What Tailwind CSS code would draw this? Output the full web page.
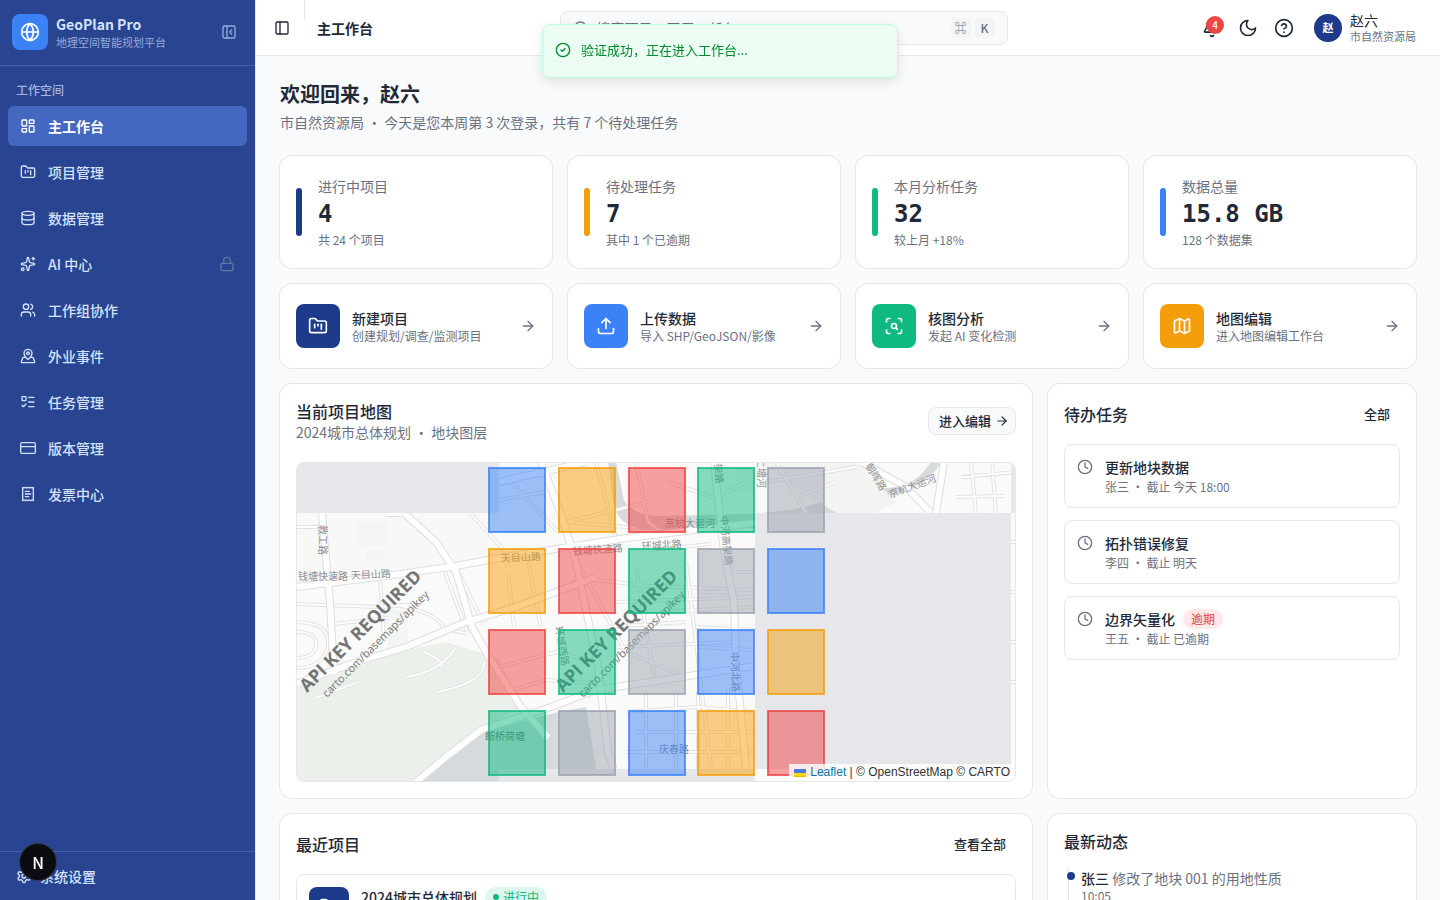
<!DOCTYPE html>
<html lang="zh-CN">
<head>
    <meta charset="UTF-8">
    <meta name="viewport" content="width=device-width, initial-scale=1.0">
    <title>GeoPlan Pro - 主工作台</title>
    <script src="https://cdn.jsdelivr.net/npm/@tailwindcss/browser@4"></script>
    <style>
        body {
            font-family: 'Noto Sans CJK SC', sans-serif;
        }
        .icon {
            fill: none;
            stroke: currentColor;
            stroke-width: 2;
            stroke-linecap: round;
            stroke-linejoin: round;
            flex-shrink: 0;
        }
    </style>
</head>
<body class="bg-[#f9fafc] text-[#1f2937]">
    <!-- shared icons -->
    <svg class="hidden">
        <symbol id="i-folder" viewBox="0 0 24 24"><path d="M4 20h16a2 2 0 0 0 2-2V8a2 2 0 0 0-2-2h-7.93a2 2 0 0 1-1.66-.9l-.82-1.2A2 2 0 0 0 7.93 3H4a2 2 0 0 0-2 2v13c0 1.1.9 2 2 2Z"/><path d="M8 10v4"/><path d="M12 10v2"/><path d="M16 10v6"/></symbol>
        <symbol id="i-arrow" viewBox="0 0 24 24"><path d="M5 12h14"/><path d="m12 5 7 7-7 7"/></symbol>
        <symbol id="i-clock" viewBox="0 0 24 24"><circle cx="12" cy="12" r="10"/><path d="M12 6v6l4 2"/></symbol>
    </svg>

    <div class="flex h-screen overflow-hidden">
        <!-- sidebar -->
        <aside class="flex w-64 shrink-0 flex-col border-r border-gray-200 bg-[#294490] text-[#d5e2fb]">
            <div class="flex h-[66px] items-center gap-2 border-b border-[#4561aa] px-3 pb-0.5">
                <div class="flex size-9 items-center justify-center rounded-lg bg-[#3b82f6] text-white">
                    <svg class="icon size-5" viewBox="0 0 24 24"><circle cx="12" cy="12" r="10"/><path d="M12 2a14.5 14.5 0 0 0 0 20 14.5 14.5 0 0 0 0-20"/><path d="M2 12h20"/></svg>
                </div>
                <div class="flex-1">
                    <div class="text-[14px] leading-5 font-bold">GeoPlan Pro</div>
                    <div class="text-[11px] leading-4 text-[#97aad8]">地理空间智能规划平台</div>
                </div>
                <button aria-label="收起侧栏" class="mr-0.5 p-1 text-[#97aad8]">
                    <svg class="icon size-4" viewBox="0 0 24 24"><rect width="18" height="18" x="3" y="3" rx="2"/><path d="M9 3v18"/><path d="m16 15-3-3 3-3"/></svg>
                </button>
            </div>
            <div class="flex-1 px-2 pt-4">
                <div class="px-2 pb-2 text-xs font-medium text-[#a5b5dc]">工作空间</div>
                <nav class="flex flex-col gap-1.5 text-sm font-medium">
                    <a href="#" class="flex h-10 items-center gap-3 rounded-md bg-[#4468bf] px-3 font-bold text-white">
                        <svg class="icon size-4" viewBox="0 0 24 24"><rect width="7" height="9" x="3" y="3" rx="1"/><rect width="7" height="5" x="14" y="3" rx="1"/><rect width="7" height="9" x="14" y="12" rx="1"/><rect width="7" height="5" x="3" y="16" rx="1"/></svg>
                        主工作台
                    </a>
                    <a href="#" class="flex h-10 items-center gap-3 rounded-md px-3">
                        <svg class="icon size-4"><use href="#i-folder"/></svg>
                        项目管理
                    </a>
                    <a href="#" class="flex h-10 items-center gap-3 rounded-md px-3">
                        <svg class="icon size-4" viewBox="0 0 24 24"><ellipse cx="12" cy="5" rx="9" ry="3"/><path d="M3 5V19A9 3 0 0 0 21 19V5"/><path d="M3 12A9 3 0 0 0 21 12"/></svg>
                        数据管理
                    </a>
                    <a href="#" class="flex h-10 items-center gap-3 rounded-md px-3">
                        <svg class="icon size-4" viewBox="0 0 24 24"><path d="M11.017 2.814a1 1 0 0 1 1.966 0l1.051 5.558a2 2 0 0 0 1.594 1.594l5.558 1.051a1 1 0 0 1 0 1.966l-5.558 1.051a2 2 0 0 0-1.594 1.594l-1.051 5.558a1 1 0 0 1-1.966 0l-1.051-5.558a2 2 0 0 0-1.594-1.594l-5.558-1.051a1 1 0 0 1 0-1.966l5.558-1.051a2 2 0 0 0 1.594-1.594z"/><path d="M20 2v4"/><path d="M22 4h-4"/><circle cx="4" cy="20" r="2"/></svg>
                        <span class="flex-1">AI 中心</span>
                        <svg class="icon size-4 text-[#62769f]" viewBox="0 0 24 24"><rect width="18" height="11" x="3" y="11" rx="2"/><path d="M7 11V7a5 5 0 0 1 10 0v4"/></svg>
                    </a>
                    <a href="#" class="flex h-10 items-center gap-3 rounded-md px-3">
                        <svg class="icon size-4" viewBox="0 0 24 24"><path d="M16 21v-2a4 4 0 0 0-4-4H6a4 4 0 0 0-4 4v2"/><circle cx="9" cy="7" r="4"/><path d="M22 21v-2a4 4 0 0 0-3-3.87"/><path d="M16 3.13a4 4 0 0 1 0 7.75"/></svg>
                        工作组协作
                    </a>
                    <a href="#" class="flex h-10 items-center gap-3 rounded-md px-3">
                        <svg class="icon size-4" viewBox="0 0 24 24"><path d="M18 8c0 3.613-3.869 7.429-5.393 8.795a1 1 0 0 1-1.214 0C9.87 15.429 6 11.613 6 8a6 6 0 0 1 12 0"/><circle cx="12" cy="8" r="2"/><path d="M8.714 14h-3.71a1 1 0 0 0-.948.683l-2.004 6A1 1 0 0 0 3 22h18a1 1 0 0 0 .948-1.316l-2-6a1 1 0 0 0-.949-.684h-3.712"/></svg>
                        外业事件
                    </a>
                    <a href="#" class="flex h-10 items-center gap-3 rounded-md px-3">
                        <svg class="icon size-4" viewBox="0 0 24 24"><rect width="6" height="6" x="3" y="4" rx="1"/><path d="m3 17 2 2 4-4"/><path d="M13 5h8"/><path d="M13 12h8"/><path d="M13 19h8"/></svg>
                        任务管理
                    </a>
                    <a href="#" class="flex h-10 items-center gap-3 rounded-md px-3">
                        <svg class="icon size-4" viewBox="0 0 24 24"><rect width="22" height="16" x="1" y="4" rx="2"/><path d="M1 10h22"/></svg>
                        版本管理
                    </a>
                    <a href="#" class="flex h-10 items-center gap-3 rounded-md px-3">
                        <svg class="icon size-4" viewBox="0 0 24 24"><path d="M4 2v20l2-1 2 1 2-1 2 1 2-1 2 1 2-1 2 1V2l-2 1-2-1-2 1-2-1-2 1-2-1-2 1Z"/><path d="M14 8H8"/><path d="M16 12H8"/><path d="M13 16H8"/></svg>
                        发票中心
                    </a>
                </nav>
            </div>
            <div class="h-[49px] border-t border-[#4561aa] px-2 py-2">
                <a href="#" class="flex h-8 items-center gap-2 px-2 text-sm font-medium">
                    <svg class="icon size-4" viewBox="0 0 24 24"><path d="M12.22 2h-.44a2 2 0 0 0-2 2v.18a2 2 0 0 1-1 1.73l-.43.25a2 2 0 0 1-2 0l-.15-.08a2 2 0 0 0-2.73.73l-.22.38a2 2 0 0 0 .73 2.73l.15.1a2 2 0 0 1 1 1.72v.51a2 2 0 0 1-1 1.74l-.15.09a2 2 0 0 0-.73 2.73l.22.38a2 2 0 0 0 2.73.73l.15-.08a2 2 0 0 1 2 0l.43.25a2 2 0 0 1 1 1.73V20a2 2 0 0 0 2 2h.44a2 2 0 0 0 2-2v-.18a2 2 0 0 1 1-1.73l.43-.25a2 2 0 0 1 2 0l.15.08a2 2 0 0 0 2.73-.73l.22-.39a2 2 0 0 0-.73-2.73l-.15-.08a2 2 0 0 1-1-1.74v-.5a2 2 0 0 1 1-1.74l.15-.09a2 2 0 0 0 .73-2.73l-.22-.38a2 2 0 0 0-2.73-.73l-.15.08a2 2 0 0 1-2 0l-.43-.25a2 2 0 0 1-1-1.73V4a2 2 0 0 0-2-2z"/><circle cx="12" cy="12" r="3"/></svg>
                    系统设置
                </a>
            </div>
        </aside>

        <div class="flex min-w-0 flex-1 flex-col">
            <!-- top bar -->
            <header class="flex h-14 shrink-0 items-center border-b border-gray-200 bg-white pr-6 pl-3">
                <button aria-label="切换侧栏" class="p-1.5">
                    <svg class="icon size-4" viewBox="0 0 24 24"><rect width="18" height="18" x="3" y="3" rx="2"/><path d="M9 3v18"/></svg>
                </button>
                <div class="ml-2 h-5 w-px self-start bg-gray-200"></div>
                <span class="ml-3 text-sm font-bold">主工作台</span>
                <div class="flex flex-1 justify-center px-4">
                    <div class="flex h-[34px] w-full max-w-md items-center gap-2 rounded-lg border border-gray-200 bg-[#f9fafc] px-3">
                        <svg class="icon size-4 text-gray-500" viewBox="0 0 24 24"><circle cx="11" cy="11" r="8"/><path d="m21 21-4.3-4.3"/></svg>
                        <input type="text" aria-label="搜索" placeholder="搜索项目、图层、任务..." class="min-w-0 flex-1 bg-transparent text-sm placeholder:text-gray-500">
                        <span class="flex gap-1">
                            <kbd class="flex size-5 items-center justify-center rounded bg-gray-100 font-[Noto_Sans_CJK_SC] text-xs text-gray-500">⌘</kbd>
                            <kbd class="flex size-5 items-center justify-center rounded bg-gray-100 font-[Noto_Sans_CJK_SC] text-xs font-medium text-gray-500">K</kbd>
                        </span>
                    </div>
                </div>
                <div class="flex items-center">
                    <button aria-label="通知" class="relative p-2">
                        <svg class="icon size-5" viewBox="0 0 24 24"><path d="M10.268 21a2 2 0 0 0 3.464 0"/><path d="M3.262 15.326A1 1 0 0 0 4 17h16a1 1 0 0 0 .74-1.673C19.41 13.956 18 12.499 18 8A6 6 0 0 0 6 8c0 4.499-1.411 5.956-2.738 7.326"/></svg>
                        <span class="absolute top-1.5 right-1.5 flex size-[18px] items-center justify-center rounded-full bg-[#ef4444] text-[10px] font-medium text-white">4</span>
                    </button>
                    <button aria-label="深色模式" class="p-2">
                        <svg class="icon size-5" viewBox="0 0 24 24"><path d="M12 3a6 6 0 0 0 9 9 9 9 0 1 1-9-9Z"/></svg>
                    </button>
                    <button aria-label="帮助" class="p-2">
                        <svg class="icon size-5" viewBox="0 0 24 24"><circle cx="12" cy="12" r="10"/><path d="M9.09 9a3 3 0 0 1 5.83 1c0 2-3 3-3 3"/><path d="M12 17h.01"/></svg>
                    </button>
                    <button class="ml-3 flex items-center gap-2 text-left">
                        <span class="flex size-7 items-center justify-center rounded-full bg-[#1e3a8a] text-[11px] font-bold text-white">赵</span>
                        <span>
                            <span class="block text-sm leading-4">赵六</span>
                            <span class="block text-[11px] leading-4 text-gray-500">市自然资源局</span>
                        </span>
                    </button>
                </div>
            </header>

            <main class="min-h-0 flex-1 overflow-y-auto p-6 [scrollbar-width:none]">
                <h1 class="text-xl font-bold">欢迎回来，赵六</h1>
                <p class="mt-1 text-sm text-gray-500">市自然资源局 · 今天是您本周第 3 次登录，共有 7 个待处理任务</p>

                <!-- stats -->
                <section class="mt-6 grid grid-cols-4 gap-4">
                    <div class="flex items-center gap-4 rounded-xl bg-white px-4 py-5 ring-1 ring-gray-200">
                        <div class="h-12 w-1.5 rounded-full bg-[#1e3a8a]"></div>
                        <div class="flex flex-col gap-0.5">
                            <p class="text-sm text-gray-500">进行中项目</p>
                            <p class="font-['DejaVu_Sans_Mono'] text-2xl font-bold">4</p>
                            <p class="text-xs text-gray-500">共 24 个项目</p>
                        </div>
                    </div>
                    <div class="flex items-center gap-4 rounded-xl bg-white px-4 py-5 ring-1 ring-gray-200">
                        <div class="h-12 w-1.5 rounded-full bg-[#f59e0b]"></div>
                        <div class="flex flex-col gap-0.5">
                            <p class="text-sm text-gray-500">待处理任务</p>
                            <p class="font-['DejaVu_Sans_Mono'] text-2xl font-bold">7</p>
                            <p class="text-xs text-gray-500">其中 1 个已逾期</p>
                        </div>
                    </div>
                    <div class="flex items-center gap-4 rounded-xl bg-white px-4 py-5 ring-1 ring-gray-200">
                        <div class="h-12 w-1.5 rounded-full bg-[#10b981]"></div>
                        <div class="flex flex-col gap-0.5">
                            <p class="text-sm text-gray-500">本月分析任务</p>
                            <p class="font-['DejaVu_Sans_Mono'] text-2xl font-bold">32</p>
                            <p class="text-xs text-gray-500">较上月 +18%</p>
                        </div>
                    </div>
                    <div class="flex items-center gap-4 rounded-xl bg-white px-4 py-5 ring-1 ring-gray-200">
                        <div class="h-12 w-1.5 rounded-full bg-[#3b82f6]"></div>
                        <div class="flex flex-col gap-0.5">
                            <p class="text-sm text-gray-500">数据总量</p>
                            <p class="font-['DejaVu_Sans_Mono'] text-2xl font-bold">15.8 GB</p>
                            <p class="text-xs text-gray-500">128 个数据集</p>
                        </div>
                    </div>
                </section>

                <!-- quick actions -->
                <section class="mt-4 grid grid-cols-4 gap-4">
                    <a href="#" class="flex items-center gap-3 rounded-xl bg-white px-4 py-5 ring-1 ring-gray-200">
                        <span class="flex size-11 items-center justify-center rounded-lg bg-[#1e3a8a] text-white">
                            <svg class="icon size-5"><use href="#i-folder"/></svg>
                        </span>
                        <span class="flex-1">
                            <span class="block text-sm font-medium">新建项目</span>
                            <span class="block text-xs text-gray-500">创建规划/调查/监测项目</span>
                        </span>
                        <svg class="icon size-4 text-gray-500"><use href="#i-arrow"/></svg>
                    </a>
                    <a href="#" class="flex items-center gap-3 rounded-xl bg-white px-4 py-5 ring-1 ring-gray-200">
                        <span class="flex size-11 items-center justify-center rounded-lg bg-[#3b82f6] text-white">
                            <svg class="icon size-5" viewBox="0 0 24 24"><path d="M12 3v12"/><path d="m17 8-5-5-5 5"/><path d="M21 15v4a2 2 0 0 1-2 2H5a2 2 0 0 1-2-2v-4"/></svg>
                        </span>
                        <span class="flex-1">
                            <span class="block text-sm font-medium">上传数据</span>
                            <span class="block text-xs text-gray-500">导入 SHP/GeoJSON/影像</span>
                        </span>
                        <svg class="icon size-4 text-gray-500"><use href="#i-arrow"/></svg>
                    </a>
                    <a href="#" class="flex items-center gap-3 rounded-xl bg-white px-4 py-5 ring-1 ring-gray-200">
                        <span class="flex size-11 items-center justify-center rounded-lg bg-[#10b981] text-white">
                            <svg class="icon size-5" viewBox="0 0 24 24"><path d="M3 7V5a2 2 0 0 1 2-2h2"/><path d="M17 3h2a2 2 0 0 1 2 2v2"/><path d="M21 17v2a2 2 0 0 1-2 2h-2"/><path d="M7 21H5a2 2 0 0 1-2-2v-2"/><circle cx="12" cy="12" r="3"/><path d="m16 16-1.9-1.9"/></svg>
                        </span>
                        <span class="flex-1">
                            <span class="block text-sm font-medium">核图分析</span>
                            <span class="block text-xs text-gray-500">发起 AI 变化检测</span>
                        </span>
                        <svg class="icon size-4 text-gray-500"><use href="#i-arrow"/></svg>
                    </a>
                    <a href="#" class="flex items-center gap-3 rounded-xl bg-white px-4 py-5 ring-1 ring-gray-200">
                        <span class="flex size-11 items-center justify-center rounded-lg bg-[#f59e0b] text-white">
                            <svg class="icon size-5" viewBox="0 0 24 24"><path d="M14.106 5.553a2 2 0 0 0 1.788 0l3.659-1.83A1 1 0 0 1 21 4.619v12.764a1 1 0 0 1-.553.894l-4.553 2.277a2 2 0 0 1-1.788 0l-4.212-2.106a2 2 0 0 0-1.788 0l-3.659 1.83A1 1 0 0 1 3 19.381V6.618a1 1 0 0 1 .553-.894l4.553-2.277a2 2 0 0 1 1.788 0z"/><path d="M15 5.764v15"/><path d="M9 3.236v15"/></svg>
                        </span>
                        <span class="flex-1">
                            <span class="block text-sm font-medium">地图编辑</span>
                            <span class="block text-xs text-gray-500">进入地图编辑工作台</span>
                        </span>
                        <svg class="icon size-4 text-gray-500"><use href="#i-arrow"/></svg>
                    </a>
                </section>

                <section class="mt-4 grid grid-cols-3 gap-4">
                    <!-- project map -->
                    <div class="col-span-2 rounded-xl bg-white p-4 ring-1 ring-gray-200">
                        <div class="flex items-center justify-between">
                            <div>
                                <h2 class="text-base leading-[22px] font-medium">当前项目地图</h2>
                                <p class="text-sm text-gray-500">2024城市总体规划 · 地块图层</p>
                            </div>
                            <button class="flex h-7 items-center gap-1 rounded-lg border border-gray-200 bg-[#f9fafc] pr-1.5 pl-2.5 text-[13px] font-medium">
                                进入编辑
                                <svg class="icon size-3.5"><use href="#i-arrow"/></svg>
                            </button>
                        </div>
                        <div class="relative mt-5 h-80 overflow-hidden rounded-lg border border-gray-200 bg-[#e5e7eb]">
                            <svg class="h-full w-full" viewBox="1 1 718 318" preserveAspectRatio="xMidYMid slice">
                                <defs>
                                    <clipPath id="tiles"><path d="M203 0H715V51H459V307H203V320H0V51H203ZM715 51H720V320H459V307H715Z"/></clipPath>
                                    <g id="roads" fill="none" stroke-linejoin="round">
                                        <path d="M0 125L90 114 160 104 203 96 330 76 459 61M90 51L105 51M26 51L34 140 38 212M108 51L140 80 160 110 176 165 190 190 225 245 252 276M0 222L60 200 110 185 170 160 220 145 300 115M245 0L266 55 280 100 302 205 312 290 322 320M120 320L150 295 185 268 255 245 300 228 459 204M203 20L290 0M418 0L428 90 438 140 440 200 450 307M565 0L610 25 635 51M648 0L640 51"/>
                                    </g>
                                    <g id="lanes" fill="none" stroke-linejoin="round">
                                        <path d="M0 142L84 145 120 142M84 115L88 180M38 162L92 156M100 143Q140 150 148 166L172 172M148 108L172 172M160 105L188 163M0 65L28 65M174 51L208 88 212 105M212 112L218 165M280 98L330 190 390 215M300 118L352 124 459 128M203 205L260 190 300 200M203 232L250 218 310 222M215 20L262 70M203 38L248 30M262 62L352 40M300 0L320 76M340 0L352 60 372 75M372 20L420 36 459 15M340 105L352 180 360 225M390 100L400 180 415 307M365 150L459 145M330 250L400 245 459 250M340 270L459 270M330 290L459 290M350 230L350 307M380 230L380 307M402 230L402 307M432 225L432 307M400 165L459 168M403 185L459 188M320 140L459 135M310 165L390 160M322 185L440 180M405 90L405 130 433 130M433 95L433 130M440 110L459 110M110 215Q145 210 160 185M142 230Q190 220 188 200M20 236L62 220M128 190Q150 200 145 205M471 20L560 5M480 0L510 51M665 15L720 10M660 35L708 34M675 0L680 51M696 0L700 51M715 80L720 80M715 130L720 130M715 180L720 180M715 220L720 220M203 150L250 130M230 90L245 165M270 60L340 66M355 88L415 82M0 160Q34 160 32 184Q28 206 0 206M0 170Q22 170 20 184Q18 196 0 196M500 35L540 20"/>
                                    </g>
                                </defs>
                                <g clip-path="url(#tiles)">
                                    <rect width="720" height="320" fill="#fafaf9"/>
                                    <path d="M0 226L60 205 110 188 150 180 203 196 225 245 185 268 130 320H0Z" fill="#ebf0eb"/>
                                    <path d="M0 51H203V95L90 108H0Z" fill="#f8f8f7"/>
                                    <path d="M60 60H92V85H60ZM70 88H88V98H70ZM88 145L112 150 112 180 92 186ZM440 5L459 5V30H440Z" fill="#f4f6f3"/>
                                    <path d="M120 320L150 297 186 270 262 250 290 245 300 307H203V320Z" fill="#d5dadf"/>
                                    <path d="M312 0H320L328 38Q335 52 360 54L459 52V66L350 68Q325 66 318 44Z" fill="#d5dadd"/>
                                    <path d="M459 51Q500 50 530 38T590 26T636 -2L645 2Q620 34 580 36T540 51Z" fill="#d8dbdc"/>
                                    <path d="M460 0H560L600 40 580 51H540Z" fill="#f3f3f2"/>
                                    <use href="#lanes" stroke="#e2e2e4" stroke-width="4"/>
                                    <use href="#lanes" stroke="#fdfdfd" stroke-width="2"/>
                                    <use href="#roads" stroke="#dedee0" stroke-width="8"/>
                                    <use href="#roads" stroke="#fefefe" stroke-width="6"/>
                                </g>
                                <g font-family="Noto Sans CJK SC" font-size="10" fill="#8f9092">
                                    <text x="2" y="118">钱塘快速路</text>
                                    <text x="55" y="117" transform="rotate(-3 55 117)">天目山路</text>
                                    <text x="205" y="100" transform="rotate(-3 205 100)">天目山路</text>
                                    <text x="277" y="93" transform="rotate(-4 277 93)">钱塘快速路</text>
                                    <text x="346" y="88" transform="rotate(-4 346 88)">环城北路</text>
                                    <text x="369" y="65">京杭大运河</text>
                                    <text x="189" y="278" fill="#6f7478">断桥荷塘</text>
                                    <text x="363" y="291">庆春路</text>
                                    <text x="23" y="63" transform="rotate(90 23 63)">教工路</text>
                                    <text x="424" y="54" transform="rotate(84 424 54)">中河高架路</text>
                                    <text x="435" y="190" transform="rotate(88 435 190)">中河北路</text>
                                    <text x="417" y="-8" transform="rotate(84 417 -8)">高架路</text>
                                    <text x="462" y="-4" transform="rotate(90 462 -4)">上塘河</text>
                                    <text x="569" y="4" transform="rotate(58 569 4)">朝晖路</text>
                                    <text x="594" y="36" transform="rotate(-20 594 36)">京杭大运河</text>
                                    <text x="259" y="165" transform="rotate(80 259 165)">环城西路</text>
                                </g>
                                <g font-family="Open Sans" fill="#737475">
                                    <text x="11" y="231" font-size="18" font-weight="700" transform="rotate(-45 11 231)">API KEY REQUIRED</text>
                                    <text x="31" y="236" font-size="11" transform="rotate(-45 31 236)">carto.com/basemaps/apikey</text>
                                    <text x="267" y="231" font-size="18" font-weight="700" transform="rotate(-45 267 231)">API KEY REQUIRED</text>
                                    <text x="287" y="236" font-size="11" transform="rotate(-45 287 236)">carto.com/basemaps/apikey</text>
                                </g>
                                <!-- land parcels -->
                                <g stroke-width="2" fill-opacity=".5" stroke-opacity=".8">
                                    <g fill="#3b82f6" stroke="#3b82f6">
                                        <rect x="193" y="6" width="56" height="64"/>
                                        <rect x="472" y="87" width="56" height="64"/>
                                        <rect x="402" y="168" width="56" height="64"/>
                                        <rect x="333" y="249" width="56" height="64"/>
                                    </g>
                                    <g fill="#f59e0b" stroke="#f59e0b">
                                        <rect x="263" y="6" width="56" height="64"/>
                                        <rect x="193" y="87" width="56" height="64"/>
                                        <rect x="472" y="168" width="56" height="64"/>
                                        <rect x="402" y="249" width="56" height="64"/>
                                    </g>
                                    <g fill="#ef4444" stroke="#ef4444">
                                        <rect x="333" y="6" width="56" height="64"/>
                                        <rect x="263" y="87" width="56" height="64"/>
                                        <rect x="193" y="168" width="56" height="64"/>
                                        <rect x="472" y="249" width="56" height="64"/>
                                    </g>
                                    <g fill="#10b981" stroke="#10b981">
                                        <rect x="402" y="6" width="56" height="64"/>
                                        <rect x="333" y="87" width="56" height="64"/>
                                        <rect x="263" y="168" width="56" height="64"/>
                                        <rect x="193" y="249" width="56" height="64"/>
                                    </g>
                                    <g fill="#9ca3af" stroke="#9ca3af">
                                        <rect x="472" y="6" width="56" height="64"/>
                                        <rect x="402" y="87" width="56" height="64"/>
                                        <rect x="333" y="168" width="56" height="64"/>
                                        <rect x="263" y="249" width="56" height="64"/>
                                    </g>
                                </g>
                            </svg>
                            <div class="absolute right-0 bottom-0 flex items-center bg-white/80 px-[5px] font-['Liberation_Sans'] text-xs leading-[17px] whitespace-pre text-[#333]"><svg class="mr-1 h-2 w-3" viewBox="0 0 12 8"><path fill="#4C7BE1" d="M0 0h12v4H0z"/><path fill="#FFD500" d="M0 4h12v3H0z"/><path fill="#E0BC00" d="M0 7h12v1H0z"/></svg><a href="#" class="text-[#0078a8]">Leaflet</a> | © OpenStreetMap © CARTO</div>
                        </div>
                    </div>

                    <!-- todo list -->
                    <div class="rounded-xl bg-white p-4 ring-1 ring-gray-200">
                        <div class="flex h-7 items-center justify-between">
                            <h2 class="text-base font-medium">待办任务</h2>
                            <button class="h-7 px-2.5 text-[13px] font-medium">全部</button>
                        </div>
                        <ul class="mt-4 flex flex-col gap-3">
                            <li class="flex gap-3 rounded-lg border border-gray-200 p-3">
                                <svg class="icon mt-0.5 size-4 text-gray-500"><use href="#i-clock"/></svg>
                                <div class="flex flex-col gap-0.5">
                                    <p class="text-sm font-medium">更新地块数据</p>
                                    <p class="text-xs text-gray-500">张三 · 截止 今天 18:00</p>
                                </div>
                            </li>
                            <li class="flex gap-3 rounded-lg border border-gray-200 p-3">
                                <svg class="icon mt-0.5 size-4 text-gray-500"><use href="#i-clock"/></svg>
                                <div class="flex flex-col gap-0.5">
                                    <p class="text-sm font-medium">拓扑错误修复</p>
                                    <p class="text-xs text-gray-500">李四 · 截止 明天</p>
                                </div>
                            </li>
                            <li class="flex gap-3 rounded-lg border border-gray-200 p-3">
                                <svg class="icon mt-0.5 size-4 text-gray-500"><use href="#i-clock"/></svg>
                                <div class="flex flex-col gap-0.5">
                                    <div class="flex items-center gap-2">
                                        <p class="text-sm font-medium">边界矢量化</p>
                                        <span class="rounded-full bg-[#fde9e9] px-2 text-xs leading-5 text-[#e5393c]">逾期</span>
                                    </div>
                                    <p class="text-xs text-gray-500">王五 · 截止 已逾期</p>
                                </div>
                            </li>
                        </ul>
                    </div>

                    <!-- recent projects -->
                    <div class="col-span-2 rounded-xl bg-white p-4 ring-1 ring-gray-200">
                        <div class="flex h-7 items-center justify-between">
                            <h2 class="text-base font-medium">最近项目</h2>
                            <button class="h-7 px-2.5 text-[13px] font-medium">查看全部</button>
                        </div>
                        <div class="mt-4 flex gap-3 rounded-lg border border-gray-200 p-3">
                            <span class="flex size-10 items-center justify-center rounded-lg bg-[#1e3a8a] text-white">
                                <svg class="icon size-5"><use href="#i-folder"/></svg>
                            </span>
                            <div>
                                <div class="flex items-center gap-2">
                                    <p class="text-sm font-medium">2024城市总体规划</p>
                                    <span class="flex items-center gap-1 rounded-full bg-[#dff5ee] px-2 text-xs leading-5 text-[#10b981]"><span class="size-1.5 rounded-full bg-[#10b981]"></span>进行中</span>
                                </div>
                            </div>
                        </div>
                    </div>

                    <!-- activity -->
                    <div class="rounded-xl bg-white p-4 ring-1 ring-gray-200">
                        <h2 class="text-base leading-[22px] font-medium">最新动态</h2>
                        <ul class="mt-4 ml-1 border-l border-gray-200">
                            <li class="relative pb-4 pl-3">
                                <span class="absolute top-1 -left-0.5 size-2 rounded-full bg-[#1e3a8a]"></span>
                                <p class="text-sm text-gray-500"><span class="font-medium text-[#1f2937]">张三</span> 修改了地块 001 的用地性质</p>
                                <p class="text-xs text-gray-500">10:05</p>
                            </li>
                        </ul>
                    </div>
                </section>
            </main>
        </div>
    </div>

    <!-- toast -->
    <div role="status" class="fixed top-6 left-1/2 flex h-[54px] w-[356px] -translate-x-1/2 items-center gap-2.5 rounded-lg border border-[#bffcd9] bg-[#ecfdf3] px-3 pb-0.5 text-[13px] text-[#008a2e] shadow-[0_4px_12px_rgba(0,0,0,0.1)]">
        <svg class="icon size-4" viewBox="0 0 24 24"><circle cx="12" cy="12" r="10"/><path d="m9 12 2 2 4-4"/></svg>
        验证成功，正在进入工作台...
    </div>

    <!-- dev tools badge -->
    <button aria-label="Dev Tools" class="fixed bottom-5 left-5 flex size-9 items-center justify-center rounded-full bg-[#0b0c12] text-base font-medium text-white ring-1 ring-[#33384a]">N</button>
</body>
</html>
